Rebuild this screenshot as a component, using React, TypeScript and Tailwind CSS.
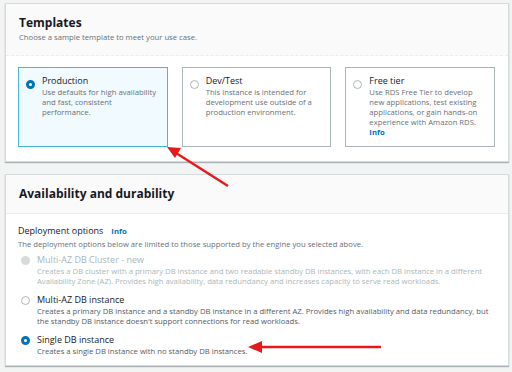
import React from "react";

const font = { fontFamily: '"Open Sans", "Noto Sans", sans-serif' };

function Radio({ state }: { state: "on" | "off" | "disabled" }) {
  if (state === "on")
    return <span className="block w-[9px] h-[9px] rounded-full border-[3px] border-[#0073bb] bg-white shrink-0" />;
  if (state === "disabled")
    return <span className="block w-[9px] h-[9px] rounded-full bg-[#d5dbdb] shrink-0" />;
  return <span className="block w-[9px] h-[9px] rounded-full border border-[#aab7b8] bg-white shrink-0" />;
}

function Card({ selected, title, desc, info }: { selected?: boolean; title: string; desc: string; info?: boolean }) {
  return (
    <div
      className={
        "flex-1 h-[80px] flex gap-[7px] pl-[7px] pr-[5px] pt-[7px] border " +
        (selected ? "border-[#44b9d6] bg-[#f1faff]" : "border-[#aab7b8] bg-white")
      }
    >
      <div className="pt-[5px]">
        <Radio state={selected ? "on" : "off"} />
      </div>
      <div className="flex flex-col">
        <div className="text-[9px] leading-[12px] text-[#16191f]">{title}</div>
        <div className="text-[7.7px] leading-[10px] text-[#687078]">
          {desc}
          {info && (
            <>
              <br />
              <span className="font-bold text-[#0073bb]">Info</span>
            </>
          )}
        </div>
      </div>
    </div>
  );
}

function Option({ state, title, desc }: { state: "on" | "off" | "disabled"; title: string; desc: string }) {
  const dis = state === "disabled";
  return (
    <div className="flex gap-[7px]">
      <div className="pt-[2px] pl-[3px]">
        <Radio state={state} />
      </div>
      <div className="flex flex-col">
        <div className={"text-[9px] leading-[12px] " + (dis ? "text-[#aab7b8]" : "text-[#16191f]")}>{title}</div>
        <div className={"text-[7.7px] leading-[10px] " + (dis ? "text-[#aab7b8]" : "text-[#545b64]")}>{desc}</div>
      </div>
    </div>
  );
}

export default function App() {
  return (
    <div className="relative w-[512px] h-[372px] bg-[#f2f3f3] pt-[3px] pl-[5px] pr-[3px] overflow-hidden" style={font}>
      <div className="bg-white border border-[#d5dbdb] shadow-[0_1px_1px_rgba(0,28,36,0.3)]">
        <div className="bg-[#fafafa] h-[52px] px-[13px] pt-[11px] border-b border-dashed border-[#eaeded]">
          <div className="text-[12px] leading-[16px] font-bold text-[#16191f]">Templates</div>
          <div className="text-[7.7px] leading-[11px] text-[#687078] mt-[1px]">Choose a sample template to meet your use case.</div>
        </div>
        <div className="flex gap-[14px] pl-[12px] pr-[13px] pt-[11px] pb-[14px]">
          <Card selected title="Production" desc="Use defaults for high availability and fast, consistent performance." />
          <Card title="Dev/Test" desc="This instance is intended for development use outside of a production environment." />
          <Card
            title="Free tier"
            desc="Use RDS Free Tier to develop new applications, test existing applications, or gain hands-on experience with Amazon RDS."
            info
          />
        </div>
      </div>

      <div className="mt-[12px] bg-white border border-[#d5dbdb] shadow-[0_1px_1px_rgba(0,28,36,0.3)]">
        <div className="bg-[#fafafa] h-[39px] px-[13px] pt-[11px] border-b border-[#eaeded]">
          <div className="text-[12px] leading-[16px] font-bold text-[#16191f]">Availability and durability</div>
        </div>
        <div className="px-[12px] pt-[11px] pb-[9px]">
          <div className="flex items-baseline gap-[8px]">
            <span className="text-[9px] leading-[12px] text-[#16191f]">Deployment options</span>
            <span className="text-[7.7px] font-bold text-[#0073bb]">Info</span>
          </div>
          <div className="text-[7.7px] leading-[10px] text-[#687078] mt-[1px]">
            The deployment options below are limited to those supported by the engine you selected above.
          </div>
          <div className="flex flex-col gap-[8px] mt-[5px]">
            <Option
              state="disabled"
              title="Multi-AZ DB Cluster - new"
              desc="Creates a DB cluster with a primary DB instance and two readable standby DB instances, with each DB instance in a different Availability Zone (AZ). Provides high availability, data redundancy and increases capacity to serve read workloads."
            />
            <Option
              state="off"
              title="Multi-AZ DB instance"
              desc="Creates a primary DB instance and a standby DB instance in a different AZ. Provides high availability and data redundancy, but the standby DB instance doesn't support connections for read workloads."
            />
            <Option state="on" title="Single DB instance" desc="Creates a single DB instance with no standby DB instances." />
          </div>
        </div>
      </div>

      <svg className="absolute left-0 top-0 pointer-events-none" width="512" height="372">
        <line x1="228" y1="186" x2="176" y2="153" stroke="#e8191b" strokeWidth="2.5" />
        <polygon points="167,147 181,148 175,158" fill="#e8191b" />
        <line x1="381" y1="347" x2="258" y2="347" stroke="#e8191b" strokeWidth="2.5" />
        <polygon points="248,347 262,341 262,353" fill="#e8191b" />
      </svg>
    </div>
  );
}
